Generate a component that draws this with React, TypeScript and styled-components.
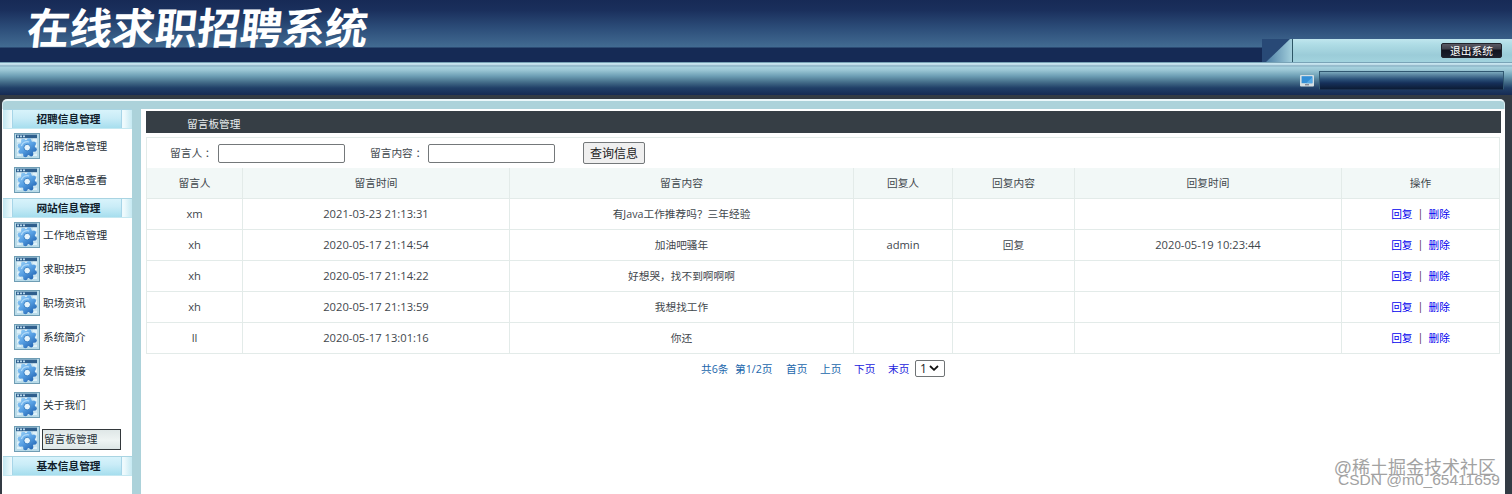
import React from "react";
import styled, { createGlobalStyle } from "styled-components";

const colors = {
  ink: "#3f474d",
  shell: "#333b44",
  teal: "#acd2da",
  line: "#e3ebe9",
  link: "#0000ee",
};

//styles
const GlobalStyle = createGlobalStyle`
  * {
    box-sizing: border-box;
  }

  body {
    margin: 0;
    overflow: hidden;
    background: ${colors.shell};
    font-family: "Open Sans", "Noto Sans CJK SC", sans-serif;
    font-size: 10.7px;
    color: ${colors.ink};
  }
`;

const Page = styled.div`
  position: relative;
  width: 1512px;
  height: 494px;
  overflow: hidden;
  display: flex;
  flex-direction: column;
`;

const Banner = styled.header`
  display: flex;
  justify-content: space-between;
  height: 62px;
  padding-left: 27px;
  background: linear-gradient(
    #172a56 0,
    #1a2f5c 10px,
    #2c4d79 28px,
    #426b92 47px,
    #152a55 48px,
    #152a55 62px
  );
`;

const Logo = styled.h1`
  margin: 0;
  color: #fff;
  font-family: "Noto Sans CJK SC", sans-serif;
  font-size: 42.6px;
  font-weight: 700;
  line-height: 52px;
  height: 62px;
  white-space: nowrap;
  transform: skewX(-6deg);
`;

const BannerCorner = styled.div`
  display: flex;
  align-self: flex-end;
  width: 250px;
  height: 23px;
`;

const CornerBar = styled.div`
  flex: 1;
  display: flex;
  justify-content: flex-end;
  padding: 4px 10px 0 0;
  border-left: 1px solid #2d5666;
  background: linear-gradient(#c0e6ee, #b0dde6 5px, #9bccd8 16px, #a2d3de 23px);
`;

const Logout = styled.button`
  width: 61px;
  height: 15px;
  padding: 0;
  border: 1px solid #20232c;
  border-radius: 2px;
  background: linear-gradient(#5a5964, #3f3f4a 5px, #12141f 6px, #1b1f2c);
  color: #fff;
  font-family: inherit;
  font-size: 10.7px;
  line-height: 14px;
`;

const Ribbon = styled.div`
  display: flex;
  justify-content: flex-end;
  align-items: flex-start;
  gap: 5px;
  height: 33px;
  padding: 9px 8px 0 0;
  background: linear-gradient(
    #3d6b86 0,
    #b7dce8 1px,
    #d4edf6 2px,
    #84acbf 4px,
    #a8d2df 5px,
    #9bc7d5 8px,
    #6d9fb5 14px,
    #456e8a 20px,
    #203f67 26px,
    #162b54 33px
  );

  svg {
    margin-top: 4px;
  }
`;

const RibbonBox = styled.div`
  width: 185px;
  height: 19px;
  border: 1px solid #315871;
  border-bottom-color: #1b3150;
  background: linear-gradient(#7ba9bc, #2c527a 7px, #16305a 11px, #0c1c35);
`;

const Shell = styled.div`
  flex: 1;
  display: flex;
  flex-direction: column;
  margin: 4px 7px 0 2px;
`;

const ShellTop = styled.div`
  height: 10px;
  border-top: 2px solid #eaf7fa;
  border-left: 1px solid #d8edf2;
  border-right: 1px solid #d8edf2;
  border-radius: 5px 5px 0 0;
  background: ${colors.teal};
`;

const Body = styled.div`
  flex: 1;
  display: flex;
  padding-left: 1px;
  background: #fff;
`;

const Sidebar = styled.nav`
  width: 138px;
  border-right: 9px solid ${colors.teal};
`;

const Group = styled.section`
  display: flex;
  flex-direction: column;
  padding-bottom: 1px;

  &:nth-child(2) {
    padding-bottom: 0;
  }
`;

const GroupTitle = styled.div`
  height: 20px;
  padding: 0 10px 0 9px;
  border-top: 1px solid #a9d4e2;
  border-bottom: 1px solid #c5e8f1;
  background: linear-gradient(
    90deg,
    #c2e7f1,
    #eefafd 9px,
    #eefafd 121px,
    #c6e9f2
  );
`;

const GroupLabel = styled.div`
  height: 18px;
  padding-left: 3px;
  border: solid #a7d5e8;
  border-width: 0 1px;
  background: linear-gradient(#d8f3fb, #c9ecf7 8px, #a6deee);
  color: #10202c;
  font-weight: 700;
  line-height: 18px;
  text-align: center;
`;

const MenuItem = styled.div`
  display: flex;
  align-items: center;
  gap: 2px;
  height: 34px;
  padding-left: 11px;
`;

const MenuText = styled.a<{ $active: boolean }>`
  width: 79px;
  height: 21px;
  padding-left: 1px;
  border: ${({ $active }) => ($active ? "1px solid #33383b" : "0")};
  background: ${({ $active }) =>
    $active ? "linear-gradient(#dfe7e7, #eef4f3 55%, #dde6e6)" : "none"};
  color: #263038;
  line-height: ${({ $active }) => ($active ? "18px" : "20px")};
`;

const Main = styled.main`
  flex: 1;
  padding: 2px 4px 0 5px;
`;

const TitleBar = styled.div`
  height: 22px;
  padding-left: 41px;
  background: #363e45;
  color: #e8ecee;
  line-height: 26px;
`;

const Panel = styled.div`
  width: 1354px;
  margin-top: 4px;
  border: 1px solid ${colors.line};
  border-bottom: 0;
`;

const Search = styled.div`
  display: flex;
  align-items: center;
  height: 30px;
  padding-left: 23px;
`;

const Label = styled.label<{ $width: number; $gap?: number }>`
  width: ${({ $width }) => $width}px;
  margin-left: ${({ $gap = 0 }) => $gap}px;
  padding-bottom: 1px;
  white-space: nowrap;
`;

const Input = styled.input`
  width: 127px;
  height: 19px;
  border: 1px solid #74787a;
  border-radius: 2px;
`;

const SearchButton = styled.button`
  width: 62px;
  height: 22px;
  margin-left: 28px;
  padding: 0;
  border: 1px solid #74787a;
  border-radius: 2px;
  background: #efefef;
  color: #222;
  font-family: inherit;
  font-size: 12px;
  line-height: 22px;
`;

const Table = styled.table`
  width: 1353px;
  table-layout: fixed;
  border-spacing: 0;
`;

const HeadCell = styled.th`
  height: 31px;
  padding: 0 0 2px;
  border-right: 1px solid ${colors.line};
  border-bottom: 1px solid ${colors.line};
  background: #f2f8f7;
  font-weight: 400;
`;

const Cell = styled.td<{ $latin?: boolean }>`
  height: 31px;
  padding: 0 0 2px;
  border-right: 1px solid ${colors.line};
  border-bottom: 1px solid ${colors.line};
  font-size: ${({ $latin }) => ($latin ? "11.2px" : "10.7px")};
  text-align: center;
`;

const Actions = styled.div`
  display: flex;
  justify-content: center;
  gap: 5px;
`;

const Divider = styled.span`
  color: #5c2f4a;
`;

const Link = styled.a`
  color: ${colors.link};
`;

const Pager = styled.div`
  display: flex;
  align-items: center;
  height: 28px;
  padding-left: 555px;
`;

const PageText = styled.span<{ $width: number; $active?: boolean }>`
  width: ${({ $width }) => $width}px;
  color: ${({ $active }) => ($active ? "#2222dd" : "#2267ac")};
  white-space: nowrap;
`;

const PageSelect = styled.div`
  display: flex;
  align-items: center;
  justify-content: space-between;
  width: 30px;
  height: 17px;
  padding: 0 5px 0 4px;
  border: 1px solid #6f7375;
  border-radius: 2px;
  color: #222;
  font-size: 12px;
`;

/* sits over the lower right corner of the page */
const Watermark = styled.div`
  position: absolute;
  right: 12px;
  bottom: 7px;
  display: flex;
  flex-direction: column;
  align-items: flex-end;
  color: #a2a2a2;
  font-family: "Liberation Sans", "Noto Sans CJK SC", sans-serif;
  white-space: nowrap;
`;

const MarkTop = styled.span`
  margin-right: 4px;
  font-size: 18px;
  line-height: 18px;
`;

const MarkBottom = styled.span`
  margin-top: -5px;
  font-size: 15.5px;
  line-height: 15px;
`;

interface IMenuGroup {
  title: string;
  items: string[];
}

const menu: IMenuGroup[] = [
  { title: "招聘信息管理", items: ["招聘信息管理", "求职信息查看"] },
  {
    title: "网站信息管理",
    items: [
      "工作地点管理",
      "求职技巧",
      "职场资讯",
      "系统简介",
      "友情链接",
      "关于我们",
      "留言板管理",
    ],
  },
  { title: "基本信息管理", items: [] },
];

const activeItem = "留言板管理";

const columns = [
  { title: "留言人", width: 96 },
  { title: "留言时间", width: 267 },
  { title: "留言内容", width: 344 },
  { title: "回复人", width: 99 },
  { title: "回复内容", width: 122 },
  { title: "回复时间", width: 267 },
  { title: "操作", width: 158 },
];

const rows = [
  ["xm", "2021-03-23 21:13:31", "有Java工作推荐吗？三年经验", "", "", ""],
  [
    "xh",
    "2020-05-17 21:14:54",
    "加油吧骚年",
    "admin",
    "回复",
    "2020-05-19 10:23:44",
  ],
  ["xh", "2020-05-17 21:14:22", "好想哭，找不到啊啊啊", "", "", ""],
  ["xh", "2020-05-17 21:13:59", "我想找工作", "", "", ""],
  ["ll", "2020-05-17 13:01:16", "你还", "", "", ""],
];

const isLatin = (text: string) => /^[\x20-\x7e]+$/.test(text);

const teeth = [0, 45, 90, 135, 180, 225, 270, 315];

const GearIcon = () => (
  <svg width="26" height="26" viewBox="0 0 26 26">
    <defs>
      <linearGradient
        id="gear"
        gradientUnits="userSpaceOnUse"
        x1="-6"
        y1="-8"
        x2="6"
        y2="8"
      >
        <stop offset="0" stopColor="#8cc8f5" />
        <stop offset="0.5" stopColor="#569fe3" />
        <stop offset="1" stopColor="#2466b3" />
      </linearGradient>
    </defs>
    <rect x="0.5" y="0.5" width="25" height="25" fill="#b9dbe9" stroke="#6f9db4" />
    <rect x="3" y="5" width="20" height="18" fill="#dff1f9" />
    <path d="M3 10h20M3 15h20M3 20h20M8 5v18M18 5v18" stroke="#b8d9e8" />
    <rect x="2" y="1.6" width="21" height="3.6" fill="#2f5f8d" />
    <path d="M3 3.4h2M6 3.4h2M9 3.4h2" stroke="#b9d8ec" strokeWidth="1.6" />
    <g transform="translate(13.2 14.6)">
      <circle r="7.8" fill="url(#gear)" />
      {teeth.map((angle) => {
        const turn = ((angle + 14) * Math.PI) / 180;
        return (
          <circle
            key={angle}
            cx={7.6 * Math.sin(turn)}
            cy={-7.6 * Math.cos(turn)}
            r="2.3"
            fill="url(#gear)"
          />
        );
      })}
      <path
        d="M-5.8 -1.6A6 6 0 0 1 2 -5.6"
        fill="none"
        stroke="#b3dbf9"
        strokeWidth="1.2"
      />
      <circle r="3.3" fill="#e6f4fc" stroke="#2f78bf" strokeWidth="0.9" />
    </g>
  </svg>
);

const MonitorIcon = () => (
  <svg width="14" height="12" viewBox="0 0 14 12">
    <rect width="14" height="11.5" rx="1" fill="#d5dfe2" />
    <rect x="1.6" y="1.2" width="10.8" height="7" fill="#338fd6" />
    <path d="M6 8.2l6.4-6v6z" fill="#55a9e4" />
    <path d="M5 9.8h4" stroke="#667" strokeWidth="1" />
  </svg>
);

const CornerFold = () => (
  <svg width="30" height="23" viewBox="0 0 30 23">
    <defs>
      <linearGradient id="fold" x1="0" y1="0" x2="1" y2="0">
        <stop offset="0" stopColor="#4d7fa5" />
        <stop offset="1" stopColor="#a3cfdc" />
      </linearGradient>
    </defs>
    <rect width="30" height="23" fill="#284976" />
    <path d="M4 23L28 0H30V23Z" fill="url(#fold)" />
  </svg>
);

const Arrow = () => (
  <svg width="10" height="6" viewBox="0 0 10 6">
    <path d="M1 1l4 3.8L9 1" fill="none" stroke="#111" strokeWidth="1.8" />
  </svg>
);

const Menu: React.FC = () => (
  <Sidebar>
    {menu.map((group) => (
      <Group key={group.title}>
        <GroupTitle>
          <GroupLabel>{group.title}</GroupLabel>
        </GroupTitle>
        {group.items.map((item) => (
          <MenuItem key={item}>
            <GearIcon />
            <MenuText $active={item === activeItem}>{item}</MenuText>
          </MenuItem>
        ))}
      </Group>
    ))}
  </Sidebar>
);

const MessageTable: React.FC = () => (
  <Table>
    <colgroup>
      {columns.map(({ title, width }) => (
        <col key={title} width={width} />
      ))}
    </colgroup>
    <thead>
      <tr>
        {columns.map(({ title }) => (
          <HeadCell key={title}>{title}</HeadCell>
        ))}
      </tr>
    </thead>
    <tbody>
      {rows.map((row) => (
        <tr key={row[1]}>
          {row.map((cell, index) => (
            <Cell key={index} $latin={isLatin(cell)}>
              {cell}
            </Cell>
          ))}
          <Cell>
            <Actions>
              <Link>回复</Link>
              <Divider>|</Divider>
              <Link>删除</Link>
            </Actions>
          </Cell>
        </tr>
      ))}
    </tbody>
  </Table>
);

const App: React.FC = () => (
  <>
    <GlobalStyle />
    <Page>
      <Banner>
        <Logo>在线求职招聘系统</Logo>
        <BannerCorner>
          <CornerFold />
          <CornerBar>
            <Logout>退出系统</Logout>
          </CornerBar>
        </BannerCorner>
      </Banner>
      <Ribbon>
        <MonitorIcon />
        <RibbonBox />
      </Ribbon>
      <Shell>
        <ShellTop />
        <Body>
          <Menu />
          <Main>
            <TitleBar>留言板管理</TitleBar>
            <Panel>
              <Search>
                <Label $width={48}>留言人 ：</Label>
                <Input />
                <Label $width={58} $gap={25}>
                  留言内容 ：
                </Label>
                <Input />
                <SearchButton>查询信息</SearchButton>
              </Search>
              <MessageTable />
            </Panel>
            <Pager>
              <PageText $width={34}>共6条</PageText>
              <PageText $width={51}>第1/2页</PageText>
              <PageText $width={34}>首页</PageText>
              <PageText $width={34}>上页</PageText>
              <PageText $width={34} $active>
                下页
              </PageText>
              <PageText $width={27} $active>
                末页
              </PageText>
              <PageSelect>
                1
                <Arrow />
              </PageSelect>
            </Pager>
          </Main>
        </Body>
      </Shell>
      <Watermark>
        <MarkTop>@稀土掘金技术社区</MarkTop>
        <MarkBottom>CSDN @m0_65411659</MarkBottom>
      </Watermark>
    </Page>
  </>
);

export default App;
